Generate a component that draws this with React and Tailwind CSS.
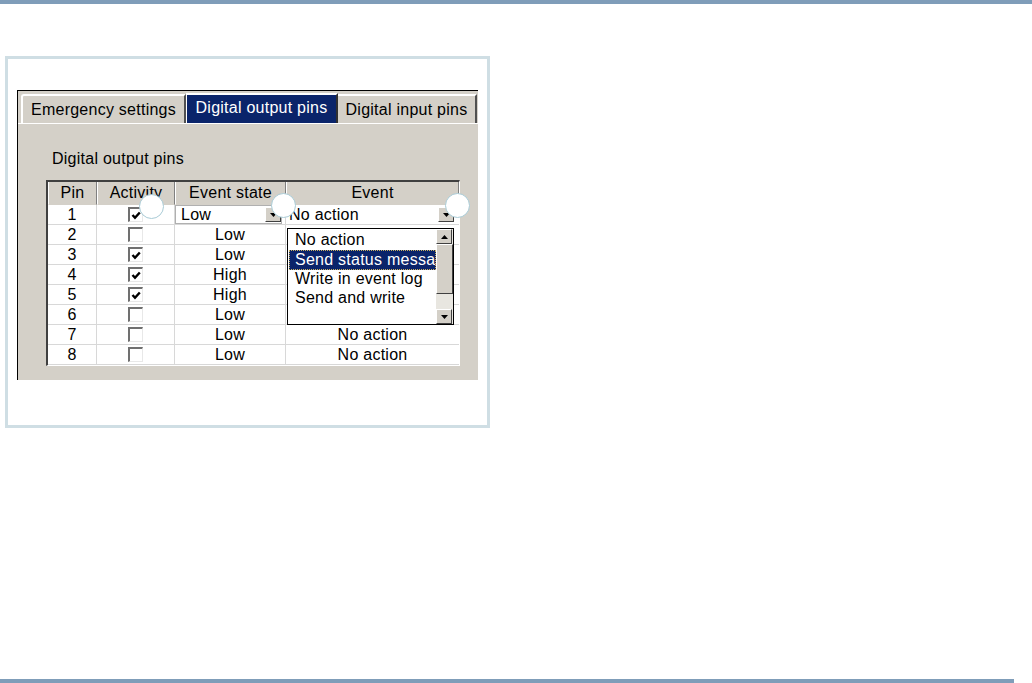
import React from 'react';

const rows = [
  { pin: 1, on: true, state: 'Low', event: 'No action' },
  { pin: 2, on: false, state: 'Low', event: '' },
  { pin: 3, on: true, state: 'Low', event: '' },
  { pin: 4, on: true, state: 'High', event: '' },
  { pin: 5, on: true, state: 'High', event: '' },
  { pin: 6, on: false, state: 'Low', event: '' },
  { pin: 7, on: false, state: 'Low', event: 'No action' },
  { pin: 8, on: false, state: 'Low', event: 'No action' },
];

const Checkbox = ({ checked }) => (
  <div className="w-[15px] h-[15px] bg-white border-t-2 border-l-2 border-[#707070] border-r border-b border-r-[#e8e8e8] border-b-[#e8e8e8] flex items-center justify-center">
    {checked && (
      <svg width="10" height="9" viewBox="0 0 10 9">
        <path d="M1.5 4 L4 6.8 L8.8 1.5" fill="none" stroke="#000" strokeWidth="2.4" />
      </svg>
    )}
  </div>
);

const ArrowBtn = ({ up }) => (
  <div className="w-[16px] h-[15px] bg-[#d4d0c8] border-t border-l border-white border-r border-b border-r-[#404040] border-b-[#404040] flex items-center justify-center">
    <svg width="7" height="4" viewBox="0 0 7 4">
      {up ? <path d="M3.5 0 L7 4 L0 4 Z" fill="#000" /> : <path d="M0 0 L7 0 L3.5 4 Z" fill="#000" />}
    </svg>
  </div>
);

const Marker = ({ className }) => (
  <div className={`absolute w-[25px] h-[25px] rounded-full bg-white border border-[#a9cbd6] ${className}`} />
);

export default function App() {
  return (
    <div className="relative w-[1032px] h-[683px] bg-white flex flex-col font-['Liberation_Sans',Arial,sans-serif] text-[16px] tracking-[0.25px] text-black">
      <div className="h-[4px] w-full bg-[#7f9db9]" />

      {/* figure frame */}
      <div className="mt-[52px] ml-[5px] w-[485px] h-[372px] border-[3px] border-[#cfdee4] pt-[31px] pl-[9px]">
        <div className="w-[461px] h-[290px] bg-[#d4d0c8] border-t border-l border-black flex flex-col">
          {/* tabs */}
          <div className="flex items-end h-[32px] pl-[3px] leading-none">
            <div className="w-[165px] h-[29px] border-t-2 border-l-2 border-white border-r-2 border-r-[#505050] rounded-tl-[3px] flex items-center justify-center">
              Emergency settings
            </div>
            <div className="w-[152px] h-[30px] bg-[#0a246a] text-white border-t-2 border-l border-white border-r-2 border-r-[#303030] flex items-center justify-center pb-[3px]">
              Digital output pins
            </div>
            <div className="w-[139px] h-[29px] border-t-2 border-white border-r-2 border-r-[#505050] flex items-center justify-center">
              Digital input pins
            </div>
          </div>

          {/* panel */}
          <div className="flex-1 border-t border-white pl-[28px]">
            <div className="mt-[26px] ml-[6px] leading-[18px]">Digital output pins</div>

            <div className="relative mt-[12px] w-[414px] border-t-2 border-l-2 border-[#404040] border-r border-b border-r-white border-b-white bg-white leading-none">
              <div className="grid grid-cols-[49px_78px_111px_173px]">
                {['Pin', 'Activity', 'Event state', 'Event'].map((h) => (
                  <div
                    key={h}
                    className="h-[23px] bg-[#d4d0c8] border-l border-white border-r border-r-[#808080] border-b border-b-[#d4d0c8] flex items-center justify-center"
                  >
                    {h}
                  </div>
                ))}

                {rows.map((r) => (
                  <React.Fragment key={r.pin}>
                    <div className="h-[20px] border-r border-b border-[#d8d8d8] flex items-center justify-center">{r.pin}</div>
                    <div className="h-[20px] border-r border-b border-[#d8d8d8] flex items-center justify-center">
                      <Checkbox checked={r.on} />
                    </div>
                    {r.pin === 1 ? (
                      <div className="h-[20px] border-r border-b border-[#d8d8d8] flex items-center pr-[3px]">
                        <div className="flex-1 h-[19px] border border-[#b0b0b0] flex items-center justify-between pl-[5px]">
                          <span>Low</span>
                          <ArrowBtn />
                        </div>
                      </div>
                    ) : (
                      <div className="h-[20px] border-r border-b border-[#d8d8d8] flex items-center justify-center">{r.state}</div>
                    )}
                    {r.pin === 1 ? (
                      <div className="h-[20px] border-b border-[#d8d8d8] flex items-center justify-between pl-[3px] pr-[5px]">
                        <span>No action</span>
                        <ArrowBtn />
                      </div>
                    ) : (
                      <div className="h-[20px] border-b border-[#d8d8d8] flex items-center justify-center">{r.event}</div>
                    )}
                  </React.Fragment>
                ))}
              </div>

              {/* dropdown list */}
              <div className="absolute left-[239px] top-[46px] w-[167px] h-[97px] bg-white border border-black flex">
                <div className="flex-1 pt-[2px] pl-[1px] overflow-hidden leading-[18.5px] whitespace-nowrap">
                  <div className="pl-[6px]">No action</div>
                  <div className="pl-[5px] bg-[#0a246a] text-white border border-dotted border-[#c8b060]">Send status messa</div>
                  <div className="pl-[6px]">Write in event log</div>
                  <div className="pl-[6px]">Send and write</div>
                </div>
                <div className="w-[17px] flex flex-col bg-[#e8e6e0]">
                  <ArrowBtn up />
                  <div className="h-[50px] bg-[#d4d0c8] border-t border-l border-white border-r border-b border-r-[#404040] border-b-[#404040]" />
                  <div className="flex-1" />
                  <ArrowBtn />
                </div>
              </div>
            </div>
          </div>
        </div>
      </div>

      <div className="flex-1" />
      <div className="h-[4px] w-[1014px] bg-[#7f9db9]" />

      <Marker className="left-[139px] top-[194px]" />
      <Marker className="left-[271px] top-[193px]" />
      <Marker className="left-[445px] top-[193px]" />
    </div>
  );
}
